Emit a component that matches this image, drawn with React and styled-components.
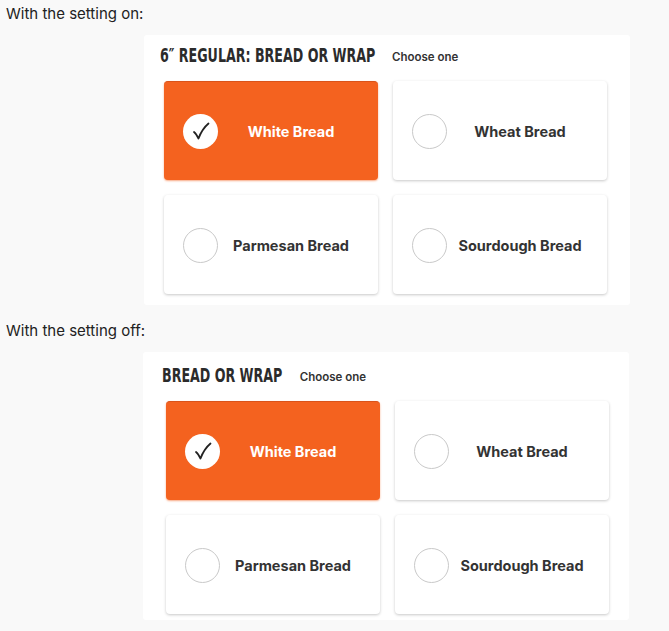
import styled, { createGlobalStyle } from "styled-components";

const GlobalStyle = createGlobalStyle`
  body {
    margin: 0;
    background: #f9f9f9;
    font-family: Inter, "Liberation Sans", sans-serif;
    color: #222;
  }
`;

// trim = width lost by squeezing the condensed title
const sections = [
  { caption: "With the setting on:", title: "6\u2033 REGULAR: BREAD OR WRAP", shift: 0, trim: 77 },
  { caption: "With the setting off:", title: "BREAD OR WRAP", shift: 1, trim: 43 },
];

const options = ["White Bread", "Wheat Bread", "Parmesan Bread", "Sourdough Bread"];

const Check = () => (
  <svg width="20" height="20" viewBox="0 0 20 20">
    <path
      d="M3 11 Q5 12.5 7.5 17.5 Q11 8 17.5 2.5"
      fill="none"
      stroke="#222"
      strokeWidth="1.8"
      strokeLinecap="round"
      strokeLinejoin="round"
    />
  </svg>
);

const App = () => {
  return (
    <Page>
      <GlobalStyle />
      {sections.map((s) => (
        <Section key={s.caption}>
          <Caption>{s.caption}</Caption>
          <Panel $shift={s.shift}>
            <Header>
              <Title $trim={s.trim}>{s.title}</Title>
              <Hint>Choose one</Hint>
            </Header>
            <Grid>
              {options.map((o, i) => (
                <Card key={o} $selected={i === 0}>
                  <Radio $selected={i === 0}>{i === 0 && <Check />}</Radio>
                  <Label $selected={i === 0}>{o}</Label>
                </Card>
              ))}
            </Grid>
          </Panel>
        </Section>
      ))}
    </Page>
  );
};

export default App;

const Page = styled.div`
  display: flex;
  flex-direction: column;
  gap: 17px;
  padding-top: 5px;
`;

const Section = styled.div`
  display: flex;
  flex-direction: column;
`;

const Caption = styled.div`
  font-size: 15px;
  line-height: 18px;
  color: #222;
  padding-left: 6px;
  margin-bottom: 12px;
`;

const Panel = styled.div`
  width: 486px;
  margin-left: ${(p) => 144 - p.$shift}px;
  background: #fff;
  border-radius: 3px;
  padding: ${(p) => (p.$shift ? "11px 20px 6px 23px" : "8px 23px 11px 20px")};
  box-sizing: border-box;
`;

const Header = styled.div`
  display: flex;
  align-items: center;
  margin-left: -4px;
  height: 24px;
  margin-bottom: 14px;
`;

const Title = styled.div`
  font-family: "DejaVu Sans Condensed", "Liberation Sans", sans-serif;
  font-stretch: condensed;
  font-weight: 700;
  font-size: 19px;
  white-space: nowrap;
  color: #2b2b2b;
  transform: scaleX(0.74);
  transform-origin: left center;
  margin-right: ${(p) => 18 - p.$trim}px;
`;

const Hint = styled.div`
  font-size: 11.5px;
  font-weight: 600;
  color: #333;
  padding-top: 3px;
`;

const Grid = styled.div`
  display: grid;
  grid-template-columns: 214px 214px;
  grid-auto-rows: 99px;
  gap: 15px;
`;

const Card = styled.div`
  display: flex;
  align-items: center;
  padding: 0 19px;
  border-radius: 4px;
  background: ${(p) => (p.$selected ? "#f4621f" : "#fff")};
  border-top: 1px solid ${(p) => (p.$selected ? "#d9531a" : "#fff")};
  box-shadow: ${(p) =>
    p.$selected
      ? "0 1px 2px rgba(244, 98, 31, 0.55)"
      : "0 1px 3px rgba(0, 0, 0, 0.22)"};
`;

const Radio = styled.div`
  flex: none;
  width: 35px;
  height: 35px;
  border-radius: 50%;
  box-sizing: border-box;
  background: #fff;
  border: ${(p) => (p.$selected ? "none" : "1.5px solid #c9c9c9")};
  display: flex;
  align-items: center;
  justify-content: center;
`;

const Label = styled.div`
  flex: 1;
  margin-left: 5px;
  text-align: center;
  font-size: 14.5px;
  font-weight: 700;
  color: ${(p) => (p.$selected ? "#fff" : "#333")};
`;
